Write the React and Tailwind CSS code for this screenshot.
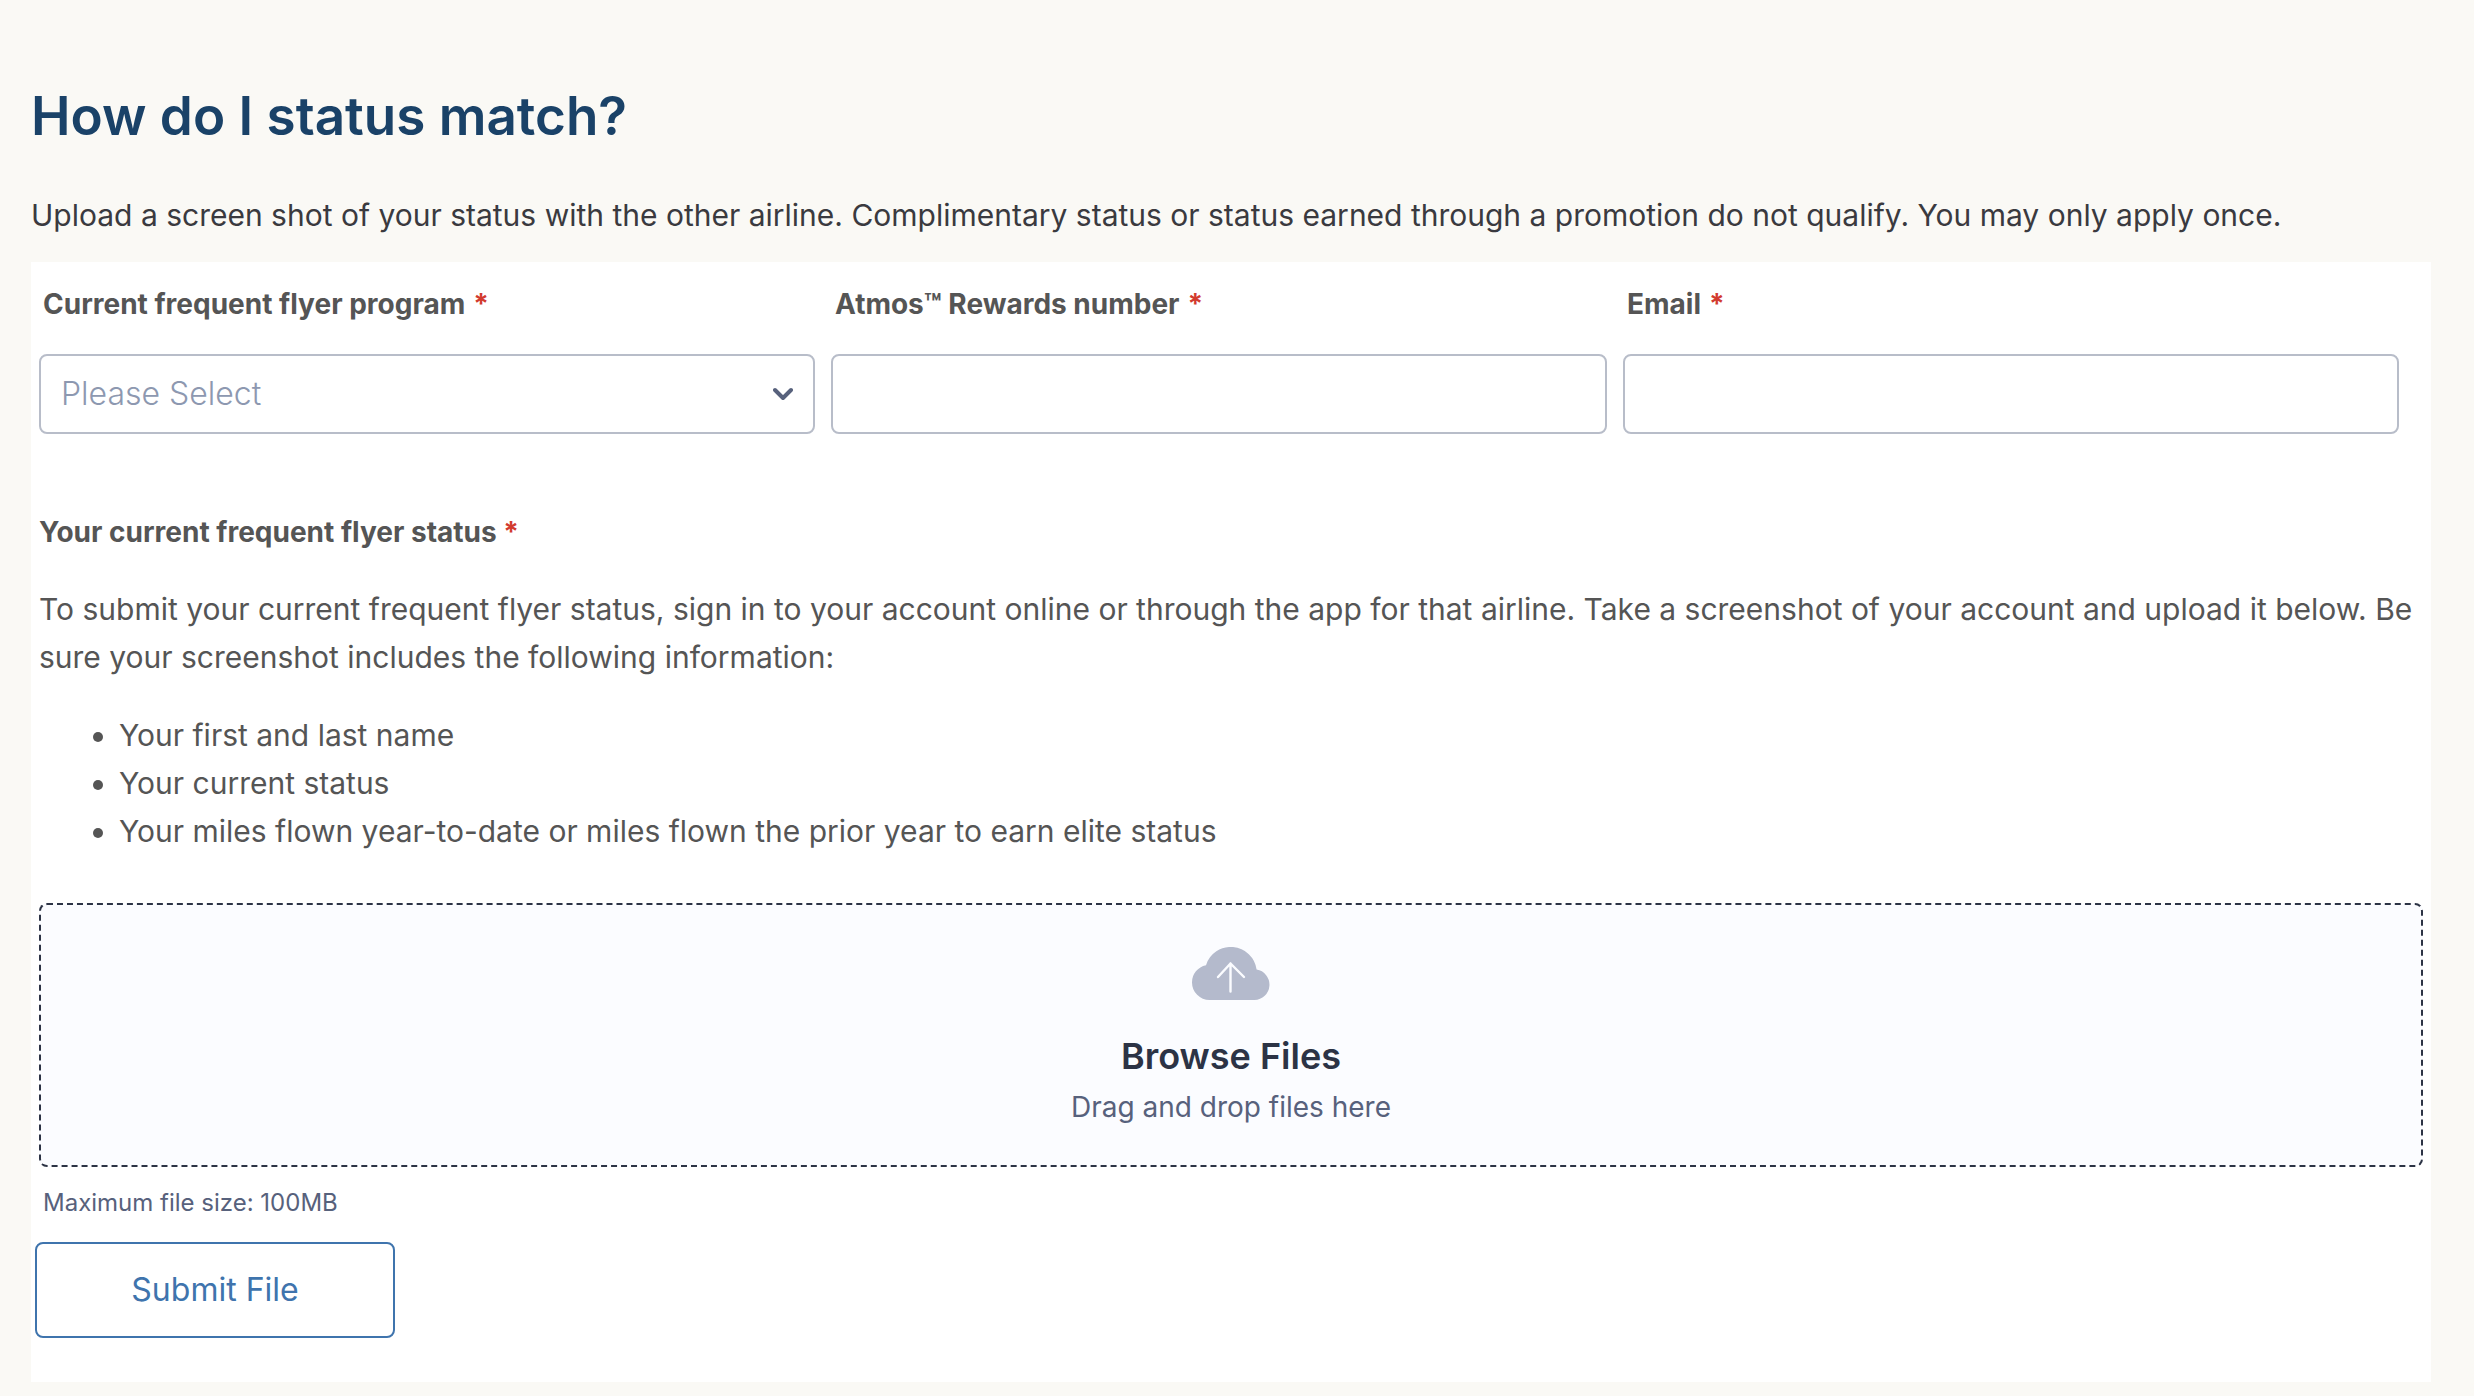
import { useState } from 'react';

function Required() {
    return <span className="text-[#d23b2f]">*</span>;
}

function Field({ id, label, children }) {
    return (
        <div className="flex flex-col gap-8">
            <label
                htmlFor={id}
                className="flex gap-2 px-1 text-[28px] leading-9 font-bold text-[#555555]"
            >
                <span>{label}</span>
                <Required />
            </label>
            {children}
        </div>
    );
}

function Chevron() {
    return (
        <svg
            viewBox="0 0 20 14"
            className="pointer-events-none absolute top-1/2 right-[22px] h-3.5 w-5 -translate-y-1/2"
            fill="none"
            stroke="#57617c"
            strokeWidth="4"
            strokeLinecap="round"
            strokeLinejoin="round"
            aria-hidden="true"
        >
            <path d="M2 3 L10 11 L18 3" />
        </svg>
    );
}

function UploadCloud() {
    return (
        <svg viewBox="0 0 78 53" className="h-[53px] w-[78px]" aria-hidden="true">
            <path
                d="M17.5 53 A17.5 17.5 0 0 1 0 35.5 A17.5 17.5 0 0 1 14 18.2 A26 26 0 0 1 64.6 22.6 A15.3 15.3 0 0 1 62.5 53 Z"
                fill="#b4bacc"
            />
            <path
                d="M38.5 44.5 V16.5 M26 30 L38.5 16.5 L52 30"
                fill="none"
                stroke="#fbfcff"
                strokeWidth="2.4"
                strokeLinecap="round"
                strokeLinejoin="round"
            />
        </svg>
    );
}

const programs = ['American AAdvantage', 'Delta SkyMiles', 'Southwest Rapid Rewards', 'United MileagePlus'];

const requirements = [
    'Your first and last name',
    'Your current status',
    'Your miles flown year-to-date or miles flown the prior year to earn elite status',
];

const inputClass = 'h-20 w-full rounded-lg border-2 border-[#b8bdc9] bg-white px-5 text-[32px] text-[#2c3345]';

export default function App() {
    const [program, setProgram] = useState('');

    return (
        <main className="min-h-screen bg-[#faf9f5] pt-20 pr-[43px] pb-3 pl-[31px] font-['Inter',sans-serif]">
            <h1 className="text-[53px] leading-[72px] font-semibold text-[#1a4268]">
                How do I status match?
            </h1>
            <p className="mt-10 mb-6 text-[30px] leading-[46px] text-[#3a3a3f]">
                Upload a screen shot of your status with the other airline. Complimentary status or
                status earned through a promotion do not qualify. You may only apply once.
            </p>

            <form
                className="bg-white px-2 pt-6 pb-11 [font-optical-sizing:none]"
                onSubmit={(e) => e.preventDefault()}
            >
                <div className="grid grid-cols-3 gap-4 pr-6">
                    <Field id="program" label="Current frequent flyer program">
                        <div className="relative">
                            <select
                                id="program"
                                value={program}
                                onChange={(e) => setProgram(e.target.value)}
                                className="h-20 w-full appearance-none rounded-lg border-2 border-[#b8bdc9] bg-white px-5 text-[32px] font-light text-[#8d98b0]"
                            >
                                <option value="">Please Select</option>
                                {programs.map((name) => (
                                    <option key={name}>{name}</option>
                                ))}
                            </select>
                            <Chevron />
                        </div>
                    </Field>
                    <Field id="number" label="Atmos™ Rewards number">
                        <input id="number" type="text" className={inputClass} />
                    </Field>
                    <Field id="email" label="Email">
                        <input id="email" type="email" className={inputClass} />
                    </Field>
                </div>

                <div className="mt-20 text-[#555555]">
                    <h2 className="text-[28px] leading-9 font-bold">
                        Your current frequent flyer status <Required />
                    </h2>
                    <p className="mt-[35px] text-[30px] leading-[48px]">
                        To submit your current frequent flyer status, sign in to your account online
                        or through the app for that airline. Take a screenshot of your account and
                        upload it below. Be sure your screenshot includes the following information:
                    </p>
                    <ul className="mt-[30px] list-disc pl-20 text-[30px] leading-[48px]">
                        {requirements.map((item) => (
                            <li key={item}>{item}</li>
                        ))}
                    </ul>
                </div>

                <button
                    type="button"
                    className="mt-12 flex w-full flex-col items-center rounded-lg border-2 border-dashed border-[#2c3345] bg-[#fbfcff] pt-[42px] pb-[39px]"
                >
                    <UploadCloud />
                    <span className="mt-8 text-[36px] leading-[48px] font-semibold text-[#2c3345]">
                        Browse Files
                    </span>
                    <span className="mt-2 text-[28px] leading-[38px] text-[#57617c]">
                        Drag and drop files here
                    </span>
                </button>
                <p className="mt-5 px-1 text-2xl leading-8 text-[#57617c]">Maximum file size: 100MB</p>

                <button
                    type="submit"
                    className="mt-[23px] -ml-1 h-24 w-[360px] rounded-lg border-2 border-[#3f74ad] bg-white text-[32px] text-[#3f74ad]"
                >
                    Submit File
                </button>
            </form>
        </main>
    );
}
